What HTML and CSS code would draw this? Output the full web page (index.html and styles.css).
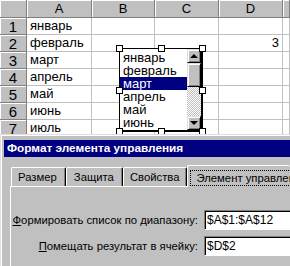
FILE: index.html
```html
<!DOCTYPE html>
<html lang="ru">
<head>
    <meta charset="UTF-8">
    <title>Формат элемента управления</title>
    <link rel="stylesheet" href="styles.css">
</head>
<body>

<div class="sheet">
    <div class="head corner"></div>
    <div class="head col">A</div>
    <div class="head col">B</div>
    <div class="head col">C</div>
    <div class="head col">D</div>
    <div class="head col"></div>

    <div class="head row">1</div>
    <div class="cell">январь</div><div class="cell"></div><div class="cell"></div><div class="cell"></div><div class="cell"></div>
    <div class="head row">2</div>
    <div class="cell">февраль</div><div class="cell"></div><div class="cell"></div><div class="cell num">3</div><div class="cell"></div>
    <div class="head row">3</div>
    <div class="cell">март</div><div class="cell"></div><div class="cell"></div><div class="cell"></div><div class="cell"></div>
    <div class="head row">4</div>
    <div class="cell">апрель</div><div class="cell"></div><div class="cell"></div><div class="cell"></div><div class="cell"></div>
    <div class="head row">5</div>
    <div class="cell">май</div><div class="cell"></div><div class="cell"></div><div class="cell"></div><div class="cell"></div>
    <div class="head row">6</div>
    <div class="cell">июнь</div><div class="cell"></div><div class="cell"></div><div class="cell"></div><div class="cell"></div>
    <div class="head row">7</div>
    <div class="cell">июль</div><div class="cell"></div><div class="cell"></div><div class="cell"></div><div class="cell"></div>
</div>

<!-- список на листе, выделен (маркеры по углам) -->
<div class="listbox">
    <ul class="items">
        <li>январь</li>
        <li>февраль</li>
        <li class="sel">март</li>
        <li>апрель</li>
        <li>май</li>
        <li>июнь</li>
    </ul>
    <div class="scroll">
        <div class="sbtn up"></div>
        <div class="thumb"></div>
        <div class="track"></div>
        <div class="sbtn down"></div>
    </div>
    <span class="handle h-tl"></span>
    <span class="handle h-tc"></span>
    <span class="handle h-tr"></span>
    <span class="handle h-ml"></span>
    <span class="handle h-mr"></span>
    <span class="handle h-bl"></span>
    <span class="handle h-bc"></span>
    <span class="handle h-br"></span>
</div>

<div class="dialog">
    <div class="titlebar">Формат элемента управления</div>
    <div class="tabs">
        <div class="tab t1">Размер</div>
        <div class="tab t2">Защита</div>
        <div class="tab t3">Свойства</div>
        <div class="tab active"><span class="focus">Элемент управления</span></div>
    </div>
    <div class="panel">
        <div class="form">
            <label for="range"><u>Ф</u>ормировать список по диапазону:</label>
            <div class="field" id="range">$A$1:$A$12</div>
            <label for="link"><u>П</u>омещать результат в ячейку:</label>
            <div class="field" id="link">$D$2</div>
        </div>
    </div>
</div>

</body>
</html>
```

FILE: styles.css
```css
body {
    margin: 0;
    width: 290px;
    height: 266px;
    overflow: hidden;
    position: relative;
    background: #fff;
    font-family: "Liberation Sans", Arial, sans-serif;
}

/* лист */
.sheet {
    display: grid;
    grid-template-columns: 27px 65px 63px 64px 64px 7px;
    grid-template-rows: 18px;
    grid-auto-rows: 17px;
    font-size: 13px;
}
.sheet > div {
    box-sizing: border-box;
}
.cell {
    border-right: 1px solid #c0c0c0;
    border-bottom: 1px solid #c0c0c0;
    display: flex;
    align-items: flex-end;
    padding: 0 3px 1px 3px;
    line-height: 14px;
    white-space: nowrap;
    overflow: hidden;
}
.cell.num {
    justify-content: flex-end;
}
.head {
    background: #c0c0c0;
    border-right: 1px solid #808080;
    border-bottom: 1px solid #808080;
    box-shadow: inset 1px 1px #fff;
    display: flex;
    align-items: center;
    justify-content: center;
}
.head.col {
    font-size: 13px;
}
.head.row {
    font-size: 15px;
    padding-top: 1px;
}

/* список */
.listbox {
    position: absolute;
    left: 119px;
    top: 48px;
    width: 84px;
    height: 84px;
    box-sizing: border-box;
    border: 1px solid #000;
    border-right-width: 2px;
    border-bottom-width: 2px;
    background: #fff;
    display: flex;
}
.items {
    flex: 1;
    list-style: none;
    margin: 0;
    padding: 2px 0 0 0;
    font-size: 13px;
    line-height: 13px;
}
.items li {
    padding-left: 3px;
    white-space: nowrap;
}
.items .sel {
    background: #000080;
    color: #fff;
}
.scroll {
    width: 14px;
    display: flex;
    flex-direction: column;
}
.sbtn, .thumb {
    box-sizing: border-box;
    background: #c0c0c0;
    border: 1px solid;
    border-color: #dfdfdf #000 #000 #dfdfdf;
    box-shadow: inset 1px 1px #fff, inset -1px -1px #808080;
}
.sbtn {
    height: 14px;
    display: flex;
    align-items: center;
    justify-content: center;
}
.sbtn::after {
    content: "";
    border-left: 4px solid transparent;
    border-right: 4px solid transparent;
}
.up::after {
    border-bottom: 4px solid #000;
}
.down::after {
    border-top: 4px solid #000;
}
.thumb {
    height: 24px;
}
.track {
    flex: 1;
    background: repeating-conic-gradient(#c0c0c0 0 25%, #fff 0 50%) 0 0 / 2px 2px;
}
.handle {
    position: absolute;
    width: 7px;
    height: 7px;
    box-sizing: border-box;
    border: 1px solid #000;
    background: #fff;
}
.h-tl { left: -4px; top: -4px; }
.h-tc { left: 38px; top: -4px; }
.h-tr { right: -5px; top: -4px; }
.h-ml { left: -4px; top: 38px; }
.h-mr { right: -5px; top: 38px; }
.h-bl { left: -4px; bottom: -5px; }
.h-bc { left: 38px; bottom: -5px; }
.h-br { right: -5px; bottom: -5px; }

/* диалог */
.dialog {
    position: absolute;
    left: 0;
    top: 134px;
    width: 290px;
    height: 132px;
    overflow: hidden;
    box-sizing: border-box;
    background: #c0c0c0;
    border-top: 1px solid #dfdfdf;
    border-left: 1px solid #dfdfdf;
    box-shadow: inset 1px 1px #fff;
    padding: 5px 0 0 3px;
    font-size: 11.3px;
}
.titlebar {
    height: 17px;
    line-height: 17px;
    background: #000080;
    color: #fff;
    font-weight: bold;
    font-size: 11.8px;
    padding-left: 3px;
    white-space: nowrap;
}
.tabs {
    display: flex;
    align-items: flex-end;
    height: 30px;
    padding-left: 7px;
    position: relative;
    z-index: 1;
    margin-bottom: -1px;
}
.tab {
    height: 19px;
    box-sizing: border-box;
    line-height: 18px;
    border-top: 1px solid #fff;
    border-left: 1px solid #fff;
    border-right: 1px solid #000;
    box-shadow: inset -1px 0 #808080;
    border-radius: 2px 2px 0 0;
    white-space: nowrap;
    margin-bottom: 1px;
}
.t1 { padding: 0 8px 0 6px; }
.t2 { padding: 0 8px 0 7px; }
.t3 { padding: 0 7px 0 6px; }
.tab.active {
    flex: 1;
    min-width: 0;
    overflow: hidden;
    height: 22px;
    margin-bottom: 0;
    padding: 3px 0 0 2px;
    border-right: 0;
    box-shadow: none;
    background: #c0c0c0;
}
.focus {
    display: inline-block;
    border: 1px dotted #000;
    padding: 0 5px;
    line-height: 14px;
}
.panel {
    margin-left: 6px;
    height: 100px;
    border-top: 1px solid #fff;
    border-left: 1px solid #fff;
}
.form {
    display: grid;
    grid-template-columns: 187px 86px;
    column-gap: 6px;
    row-gap: 6px;
    align-items: center;
    padding-top: 23px;
}
.form label {
    text-align: right;
    white-space: nowrap;
}
.field {
    height: 20px;
    box-sizing: border-box;
    background: #fff;
    border: 1px solid;
    border-color: #808080 #fff #fff #808080;
    border-right: 0;
    box-shadow: inset 1px 1px #000;
    padding-left: 2px;
    font-size: 12px;
    line-height: 18px;
}
```
